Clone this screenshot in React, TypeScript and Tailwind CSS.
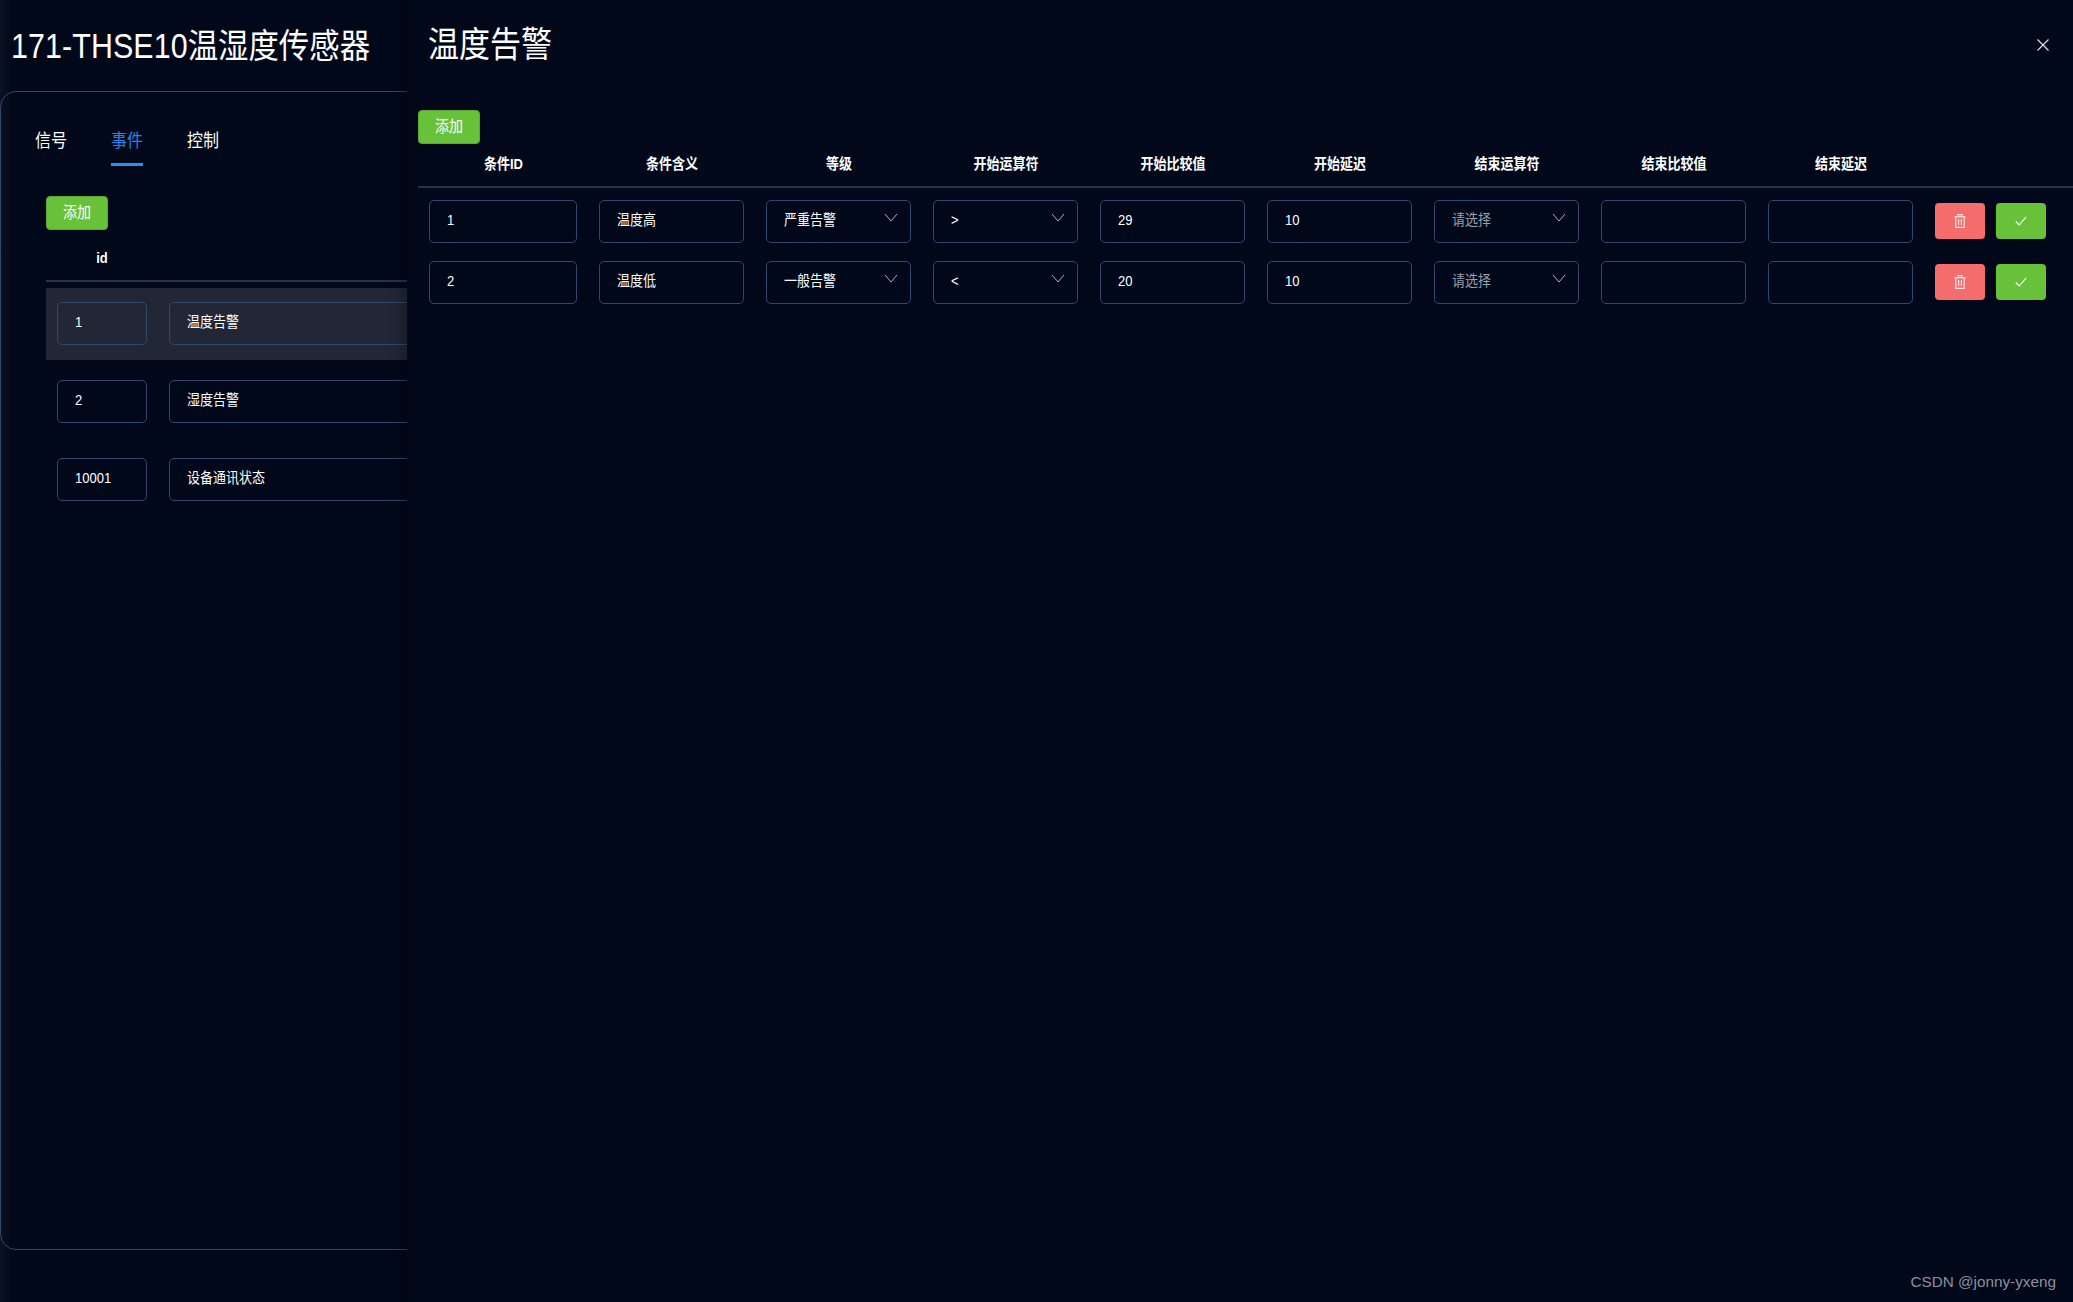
const cellBorder = "border border-[#2e486e] rounded-[5px]"

// the text in the reference runs a little taller than the font's natural shape
function Txt({ children }: { children?: React.ReactNode }) {
  return <span className="inline-block scale-y-[1.14]">{children}</span>
}

function Chevron() {
  return (
    <svg width="14" height="9" viewBox="0 0 14 9" fill="none" className="absolute right-[12px] top-[12px]">
      <path d="M1 1 L7 8 L13 1" stroke="#aab2bf" strokeWidth="1" />
    </svg>
  )
}

function Trash() {
  return (
    <svg width="12" height="14" viewBox="0 0 12 14" fill="none" stroke="#ffe6e6" strokeWidth="1.2">
      <path d="M0.5 2.8 H11.5" />
      <path d="M4 2.8 V0.7 H8 V2.8" />
      <path d="M1.8 2.8 V13.4 H10.2 V2.8" />
      <path d="M4.6 5 V11 M7.4 5 V11" />
    </svg>
  )
}

function CheckMark() {
  return (
    <svg width="12" height="10" viewBox="0 0 12 10" fill="none" stroke="#ffffff" strokeWidth="1.1">
      <path d="M0.8 5.5 L4.2 9 L11.2 0.8" />
    </svg>
  )
}

function Field({ value }: { value?: string }) {
  return (
    <div className={`h-[43px] flex items-center pb-[3px] pl-[17px] text-[13px] text-white ${cellBorder}`}>
      <Txt>{value}</Txt>
    </div>
  )
}

function Select({ value, placeholder }: { value?: string; placeholder?: string }) {
  return (
    <div className={`relative h-[43px] flex items-center pb-[3px] pl-[17px] text-[13px] ${value ? "text-white" : "text-[#9aa0aa]"} ${cellBorder}`}>
      <Txt>{value ?? placeholder}</Txt>
      <Chevron />
    </div>
  )
}

function AddButton() {
  return (
    <button className="w-[62px] h-[34px] bg-[#67c23a] border border-[#5aa833] rounded-[4px] text-white text-[14px] pb-[1px]">
      <Txt>添加</Txt>
    </button>
  )
}

const conditions = [
  { id: "1", meaning: "温度高", level: "严重告警", op: ">", value: "29", delay: "10" },
  { id: "2", meaning: "温度低", level: "一般告警", op: "<", value: "20", delay: "10" },
]

const headers = ["条件ID", "条件含义", "等级", "开始运算符", "开始比较值", "开始延迟", "结束运算符", "结束比较值", "结束延迟"]

const events = [
  { id: "1", name: "温度告警", active: true },
  { id: "2", name: "湿度告警" },
  { id: "10001", name: "设备通讯状态" },
]

export default function App() {
  return (
    <div
      className="flex h-[1302px] w-[2073px] overflow-hidden bg-[#00081a] text-white"
      style={{ fontFamily: '"Liberation Sans", "Noto Sans CJK SC", sans-serif' }}
    >
      {/* page behind the drawer */}
      <div className="w-[407px] shrink-0 overflow-hidden bg-[linear-gradient(90deg,#0b1222_0,#00081a_12px)]">
        <h1 className="h-[91px] pl-[11px] pt-[25px] text-[30.4px] leading-[40px] font-normal whitespace-nowrap">
          <Txt><span className="tracking-[0.1px]">171-THSE10</span>温湿度传感器</Txt>
        </h1>
        <div className="w-[900px] h-[1159px] border border-[#2e486e] rounded-2xl pl-[45px] pt-[35px]">
          <div className="flex text-[16px] leading-[28px] -ml-[11px] gap-[44px]">
            <span><Txt>信号</Txt></span>
            <span className="text-[#1e86f0] relative">
              <Txt>事件</Txt>
              <span className="absolute left-0 right-0 top-[36px] h-[3px] bg-[#2a8cf0]" />
            </span>
            <span><Txt>控制</Txt></span>
          </div>
          <div className="mt-[41px]">
            <AddButton />
          </div>
          <div className="w-[600px] mt-[13px]">
            <div className="h-[39px] border-b-2 border-[#22344f] flex text-[13px] font-bold">
              <div className="w-[112px] text-center pt-[5px]"><Txt>id</Txt></div>
            </div>
            <div className="pt-[6px]">
              {events.map((e) => (
                <div key={e.id} className={`h-[72px] mb-[6px] pb-[1px] flex items-center ${e.active ? "bg-[#212735]" : ""}`}>
                  <div className="w-[112px] px-[11px]">
                    <Field value={e.id} />
                  </div>
                  <div className="flex-1 pl-[11px]">
                    <Field value={e.name} />
                  </div>
                </div>
              ))}
            </div>
          </div>
        </div>
      </div>

      {/* drawer */}
      <div className="flex-1 min-w-0 pl-[11px] bg-[#00081a] shadow-[-6px_0_10px_rgba(0,0,0,0.25)] relative">
        <div className="h-[110px] pl-[10px] pt-[26px] text-[31px] leading-[40px]"><Txt>温度告警</Txt></div>
        <svg width="12" height="12" viewBox="0 0 12 12" className="absolute top-[39px] right-[24px]" stroke="#e5e7eb" strokeWidth="1.1">
          <path d="M0.5 0.5 L11.5 11.5 M11.5 0.5 L0.5 11.5" />
        </svg>
        <AddButton />
        <div className="grid grid-cols-[170px_repeat(8,167px)_1fr] h-[44px] items-center border-b-2 border-[#22344f] text-[13px] font-bold text-center">
          {headers.map((h) => (
            <div key={h} className="pb-[2px] pl-[1px]"><Txt>{h}</Txt></div>
          ))}
        </div>
        <div className="pt-[12px] flex flex-col gap-[18px]">
          {conditions.map((c) => (
            <div key={c.id} className="grid grid-cols-[170px_repeat(8,167px)_1fr] items-center">
              <div className="px-[11px]"><Field value={c.id} /></div>
              <div className="px-[11px]"><Field value={c.meaning} /></div>
              <div className="px-[11px]"><Select value={c.level} /></div>
              <div className="px-[11px]"><Select value={c.op} /></div>
              <div className="px-[11px]"><Field value={c.value} /></div>
              <div className="px-[11px]"><Field value={c.delay} /></div>
              <div className="px-[11px]"><Select placeholder="请选择" /></div>
              <div className="px-[11px]"><Field /></div>
              <div className="px-[11px]"><Field /></div>
              <div className="flex gap-[11px] pl-[11px]">
                <button className="w-[50px] h-[36px] -mt-[1px] bg-[#f56c6c] rounded-[4px] flex items-center justify-center"><Trash /></button>
                <button className="w-[50px] h-[36px] -mt-[1px] bg-[#67c23a] rounded-[4px] flex items-center justify-center"><CheckMark /></button>
              </div>
            </div>
          ))}
        </div>
        <div className="absolute right-[17px] bottom-[10px] text-[15.3px] leading-[20px] text-[#8b909a]">CSDN @jonny-yxeng</div>
      </div>
    </div>
  )
}
